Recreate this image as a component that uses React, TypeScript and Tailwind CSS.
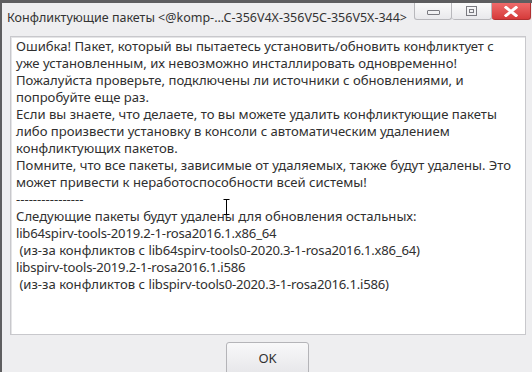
import React from "react";

type Line = { text: string; lat?: string };

const lines: Line[] = [
  { text: "Ошибка! Пакет, который вы пытаетесь установить/обновить конфликтует с" },
  { text: "уже установленным, их невозможно инсталлировать одновременно!" },
  { text: "Пожалуйста проверьте, подключены ли источники с обновлениями, и" },
  { text: "попробуйте еще раз." },
  { text: "Если вы знаете, что делаете, то вы можете удалить конфликтующие пакеты" },
  { text: "либо произвести установку в консоли с автоматическим удалением" },
  { text: "конфликтующих пакетов." },
  { text: "Помните, что все пакеты, зависимые от удаляемых, также будут удалены. Это" },
  { text: "может привести к неработоспособности всей системы!" },
  { text: "----------------" },
  { text: "Следующие пакеты будут удалены для обновления остальных:" },
  { text: "", lat: "lib64spirv-tools-2019.2-1-rosa2016.1.x86_64" },
  { text: "\u00a0(из-за конфликтов с ", lat: "lib64spirv-tools0-2020.3-1-rosa2016.1.x86_64)" },
  { text: "", lat: "libspirv-tools-2019.2-1-rosa2016.1.i586" },
  { text: "\u00a0(из-за конфликтов с ", lat: "libspirv-tools0-2020.3-1-rosa2016.1.i586)" },
];

function TitleButtons() {
  return (
    <div className="flex shrink-0 pr-[1px]">
      <div className="w-[38px] h-[17px] border border-t-0 border-[#b8b8bc] rounded-b-[3px] bg-gradient-to-b from-[#fbfbfb] to-[#e9e9ec] flex items-center justify-center">
        <div className="w-[13px] h-[5px] border border-[#7a7a80] rounded-[1px] mt-[3px]" />
      </div>
      <div className="w-[40px] h-[17px] border border-t-0 border-l-0 border-[#b8b8bc] rounded-b-[3px] bg-gradient-to-b from-[#fbfbfb] to-[#e9e9ec] flex items-center justify-center">
        <div className="w-[11px] h-[10px] border border-[#7a7a80] flex items-center justify-center">
          <div className="w-[5px] h-[4px] border border-[#7a7a80]" />
        </div>
      </div>
      <div className="w-[39px] h-[17px] border border-t-0 border-l-0 border-[#b03030] rounded-b-[3px] bg-gradient-to-b from-[#ee6a6a] to-[#d63a3a] flex items-center justify-center">
        <svg width="14" height="11" viewBox="0 0 14 11">
          <path d="M2 1.5 L12 9.5 M12 1.5 L2 9.5" stroke="#ffffff" strokeWidth="3" strokeLinecap="square" />
        </svg>
      </div>
    </div>
  );
}

export default function App() {
  return (
    <div
      className="relative w-[532px] h-[372px] overflow-hidden bg-[#5e5e60] pt-[3px] pl-[2px]"
      style={{ fontFamily: '"Noto Sans", "Open Sans", sans-serif' }}
    >
      <div className="flex flex-col h-full bg-[#eeeef0]">
        {/* Title bar */}
        <div className="flex items-start h-[33px] shrink-0">
          <div className="flex-1 min-w-0 overflow-hidden pl-[5px] pt-[6px] text-[12.5px] leading-[18px] text-[#333333] whitespace-nowrap">
            Конфликтующие пакеты &lt;@komp-...C-356V4X-356V5C-356V5X-344&gt;
          </div>
          <TitleButtons />
        </div>
        {/* Body */}
        <div className="pl-[8px] pr-[6px]">
          <div className="h-[299px] bg-white border border-[#c8c8cc] shadow-[inset_1px_1px_0_#e4e4e6] pl-[5px] pt-[1px] text-[13.1px] leading-[17px] text-[#303030] whitespace-pre">
            {lines.map((l, i) => (
              <div key={i}>
                {l.text}
                {l.lat && <span className="tracking-[-0.2px]">{l.lat}</span>}
              </div>
            ))}
          </div>
        </div>
        <div className="flex justify-center pt-[7px] pl-[1px]">
          <div className="w-[83px] h-[34px] border border-[#b4b4b8] rounded-[3px] bg-gradient-to-b from-[#f8f8f9] to-[#e6e6e9] flex items-start justify-center pt-[6px] text-[13px] leading-[18px] text-[#303030]">
            OK
          </div>
        </div>
      </div>
      {/* I-beam mouse cursor lying over the text */}
      <svg className="absolute left-[223px] top-[199px]" width="7" height="16" viewBox="0 0 7 16">
        <path d="M0.5 0.5 H6.5 M3.5 0.5 V15.5 M0.5 15.5 H6.5" stroke="#ffffff" strokeWidth="2.5" />
        <path d="M0.5 0.5 H6.5 M3.5 0.5 V15.5 M0.5 15.5 H6.5" stroke="#000000" strokeWidth="1" />
      </svg>
    </div>
  );
}
